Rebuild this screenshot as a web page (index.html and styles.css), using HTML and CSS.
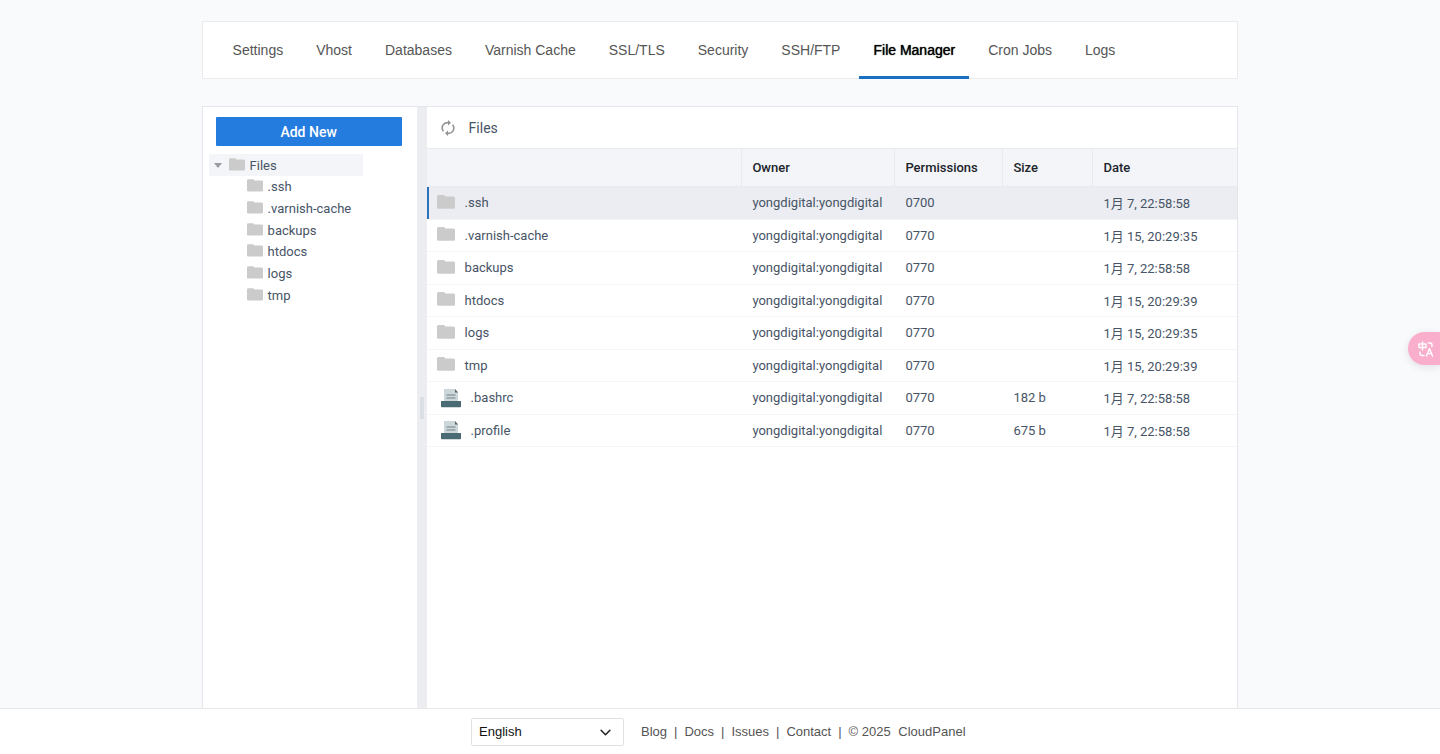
FILE: index.html
```
<!DOCTYPE html>
<html lang="en">
<head>
  <meta charset="UTF-8" />
  <meta name="viewport" content="width=device-width, initial-scale=1.0"/>
  <title>CloudPanel | File Manager</title>
  <link rel="stylesheet" href="styles.css">
</head>
<body>
  <svg class="sprite" aria-hidden="true">
    <symbol id="folder" viewBox="0 0 18 14">
      <path d="M1.5 0h5.500l1.500 1.500h8q1.500 0 1.500 1.500v9.500q0 1.300-1.300 1.300H1.300Q0 13.800 0 12.500V1.500Q0 0 1.500 0z" fill="#cbcbcb"/>
    </symbol>
    <symbol id="file" viewBox="0 0 20 20">
      <path d="M3 1h11l3 3v9H3z" fill="#cdd6d8"/>
      <path d="M14 1l3 3.500h-3z" fill="#4f666c"/>
      <path d="M5.500 7h9M5.500 10h9" stroke="#6f8388" stroke-width="1.200"/>
      <path d="M0 13h20v5.500q0 .8-.8.8H.8q-.8 0-.8-.8z" fill="#4a6a74"/>
    </symbol>
  </svg>

  <main class="container">
    <nav class="tabs">
      <a href="#">Settings</a>
      <a href="#">Vhost</a>
      <a href="#">Databases</a>
      <a href="#">Varnish Cache</a>
      <a href="#">SSL/TLS</a>
      <a href="#">Security</a>
      <a href="#">SSH/FTP</a>
      <a href="#" class="active">File Manager</a>
      <a href="#">Cron Jobs</a>
      <a href="#">Logs</a>
    </nav>

    <section class="manager">
      <aside class="sidebar">
        <button type="button" class="add-btn">Add New</button>
        <div class="tree">
          <div class="tree-root">
            <svg class="caret" viewBox="0 0 8 5"><path d="M0 0h8L4 5z" fill="#999da3"/></svg>
            <svg class="folder"><use href="#folder"/></svg>
            <span>Files</span>
          </div>
          <ul class="tree-list">
            <li><svg class="folder"><use href="#folder"/></svg>.ssh</li>
            <li><svg class="folder"><use href="#folder"/></svg>.varnish-cache</li>
            <li><svg class="folder"><use href="#folder"/></svg>backups</li>
            <li><svg class="folder"><use href="#folder"/></svg>htdocs</li>
            <li><svg class="folder"><use href="#folder"/></svg>logs</li>
            <li><svg class="folder"><use href="#folder"/></svg>tmp</li>
          </ul>
        </div>
      </aside>

      <div class="resizer"><span></span></div>

      <div class="content">
        <div class="path">
          <button type="button" class="refresh" aria-label="Refresh">
            <svg viewBox="0 0 14 16" fill="none" stroke="#939393" stroke-width="1.600">
              <path d="M2.400 11.200A5.300 5.300 0 0 1 7.500 2.700M11.600 4.800A5.300 5.300 0 0 1 6.500 13.300"/>
              <path d="M7 0l3 2.700-3 2.700zM7 10.600l-3 2.700 3 2.700z" fill="#939393" stroke="none"/>
            </svg>
          </button>
          <span>Files</span>
        </div>
        <table class="files">
          <colgroup>
            <col>
            <col class="col-owner">
            <col class="col-perm">
            <col class="col-size">
            <col class="col-date">
          </colgroup>
          <thead>
            <tr><th></th><th>Owner</th><th>Permissions</th><th>Size</th><th>Date</th></tr>
          </thead>
          <tbody>
            <tr class="selected"><td><div class="name"><svg class="folder"><use href="#folder"/></svg>.ssh</div></td><td>yongdigital:yongdigital</td><td>0700</td><td></td><td>1月 7, 22:58:58</td></tr>
            <tr><td><div class="name"><svg class="folder"><use href="#folder"/></svg>.varnish-cache</div></td><td>yongdigital:yongdigital</td><td>0770</td><td></td><td>1月 15, 20:29:35</td></tr>
            <tr><td><div class="name"><svg class="folder"><use href="#folder"/></svg>backups</div></td><td>yongdigital:yongdigital</td><td>0770</td><td></td><td>1月 7, 22:58:58</td></tr>
            <tr><td><div class="name"><svg class="folder"><use href="#folder"/></svg>htdocs</div></td><td>yongdigital:yongdigital</td><td>0770</td><td></td><td>1月 15, 20:29:39</td></tr>
            <tr><td><div class="name"><svg class="folder"><use href="#folder"/></svg>logs</div></td><td>yongdigital:yongdigital</td><td>0770</td><td></td><td>1月 15, 20:29:35</td></tr>
            <tr><td><div class="name"><svg class="folder"><use href="#folder"/></svg>tmp</div></td><td>yongdigital:yongdigital</td><td>0770</td><td></td><td>1月 15, 20:29:39</td></tr>
            <tr><td><div class="name"><svg class="file"><use href="#file"/></svg>.bashrc</div></td><td>yongdigital:yongdigital</td><td>0770</td><td>182 b</td><td>1月 7, 22:58:58</td></tr>
            <tr><td><div class="name"><svg class="file"><use href="#file"/></svg>.profile</div></td><td>yongdigital:yongdigital</td><td>0770</td><td>675 b</td><td>1月 7, 22:58:58</td></tr>
          </tbody>
        </table>
      </div>
    </section>
  </main>

  <footer class="footer">
    <div class="lang">
      <select aria-label="Language">
        <option>English</option>
      </select>
      <svg viewBox="0 0 10 6"><path d="M1 1l4 4 4-4" fill="none" stroke="#222" stroke-width="1.400" stroke-linecap="round" stroke-linejoin="round"/></svg>
    </div>
    <div class="links">
      <a href="#">Blog</a><span>|</span>
      <a href="#">Docs</a><span>|</span>
      <a href="#">Issues</a><span>|</span>
      <a href="#">Contact</a><span>|</span>
    </div>
    <div class="copy">© 2025 <a href="#">CloudPanel</a></div>
  </footer>

  <button type="button" class="translate" aria-label="Translate">
    <svg viewBox="0 0 16 16" fill="none" stroke="#fff" stroke-width="1.400" stroke-linecap="round" stroke-linejoin="round">
      <path d="M1 3h7v3.500H1zM4.500 1v8M10.500 2h1.500q2 0 2 2v1.500M2 11v1.500q0 2 2 2h2"/>
      <path d="M8.500 15l3-7.500 3 7.500M9.600 12.600h3.800"/>
    </svg>
  </button>
</body>
</html>
```
FILE: styles.css
```
* {
  box-sizing: border-box;
}
body {
  margin: 0;
  height: 100vh;
  display: flex;
  flex-direction: column;
  font-family: "Liberation Sans", Arial, sans-serif;
  font-size: 14px;
  color: #555;
  background: #f9fafc;
  overflow: hidden;
}
a {
  color: inherit;
  text-decoration: none;
}
button {
  border: 0;
  padding: 0;
  cursor: pointer;
}
.sprite {
  display: none;
}
.container {
  flex: 1;
  min-height: 0;
  width: 72%;
  margin: 0 auto;
  padding-top: 21px;
  display: flex;
  flex-direction: column;
  gap: 27px;
}
.tabs {
  display: flex;
  gap: 5px;
  height: 58px;
  padding: 0 16px;
  background: #fff;
  border: 1px solid #ebebed;
}
.tabs a {
  display: flex;
  align-items: center;
  padding: 0 14px;
  margin-bottom: -1px;
  border-top: 2px solid transparent;
  border-bottom: 3px solid transparent;
}
.tabs .active {
  color: #000;
  text-shadow: 0 0 1px #000;
  border-bottom-color: #1b6fc0;
}
.manager {
  flex: 1;
  min-height: 0;
  display: flex;
  background: #fff;
  border: 1px solid #e4e6ea;
  border-bottom: 0;
  font-family: Roboto, "Noto Sans CJK SC", sans-serif;
  font-size: 13px;
  color: #475466;
}
.folder {
  width: 18px;
  height: 14px;
  flex: none;
}
.sidebar {
  width: 214px;
  padding: 10px 15px 0 13px;
}
.add-btn {
  width: 100%;
  height: 29px;
  border-radius: 1px;
  background: #257cdf;
  color: #fff;
  font: 500 14px Roboto, sans-serif;
}
.tree {
  margin: 8px 0 0 -7px;
}
.tree-root {
  display: flex;
  align-items: center;
  width: 154px;
  height: 22px;
  padding-left: 5px;
  background: #f4f5f9;
}
.tree .folder {
  width: 16px;
  height: 13px;
  margin: -2px 5px 0 0;
}
.tree .caret {
  width: 8px;
  height: 5px;
  margin-right: 7px;
}
.tree-list {
  display: grid;
  grid-auto-rows: 1fr;
  height: 130px;
  margin: 0;
  padding: 0 0 0 38px;
  list-style: none;
}
.tree-list li {
  display: flex;
  align-items: center;
}
.resizer {
  width: 10px;
  display: flex;
  align-items: center;
  justify-content: center;
  background: #ebedf0;
}
.resizer span {
  width: 4px;
  height: 22px;
  background: #dadfe5;
}
.content {
  flex: 1;
}
.path {
  display: flex;
  align-items: center;
  gap: 14px;
  height: 41px;
  padding-left: 14px;
  font-size: 14px;
}
.refresh {
  width: 14px;
  height: 16px;
  background: none;
}
.refresh svg {
  display: block;
}
.files {
  width: 100%;
  height: 299px;
  table-layout: fixed;
  border-spacing: 0;
}
.col-owner {
  width: 153px;
}
.col-perm {
  width: 108px;
}
.col-size {
  width: 90px;
}
.col-date {
  width: 145px;
}
.files thead tr {
  height: 39px;
}
.files th {
  padding: 0 0 0 10px;
  text-align: left;
  font-weight: 500;
  color: #20242b;
  background: #f4f5f8;
  border-top: 1px solid #e8eaee;
  border-bottom: 1px solid #e8eaee;
}
.files th + th {
  border-left: 1px solid #e8eaee;
}
.files td {
  padding: 0 0 0 11px;
  border-bottom: 1px solid #f4f5f7;
  white-space: nowrap;
}
.files td:first-child {
  padding-left: 10px;
}
.name {
  display: flex;
  align-items: center;
  height: 20px;
}
.name .folder {
  margin: -2px 10px 0 0;
}
.name .file {
  width: 20px;
  height: 20px;
  margin: 0 10px 0 4px;
}
.selected td {
  background: #ebedf2;
}
.selected td:first-child {
  box-shadow: inset 2px 0 #2c71bd;
}
.footer {
  flex: none;
  display: flex;
  align-items: center;
  height: 46px;
  padding-left: calc(50% - 249px);
  background: #fff;
  border-top: 1px solid #e8e8e8;
  font-size: 13px;
}
.lang {
  position: relative;
  width: 153px;
  margin-right: 17px;
}
.lang select {
  appearance: none;
  display: block;
  width: 100%;
  height: 28px;
  padding: 0 7px;
  border: 1px solid #e2e2e4;
  border-radius: 2px;
  background: #fff;
  color: #111;
  font: inherit;
}
.lang svg {
  position: absolute;
  top: 11px;
  right: 13px;
  width: 11px;
  height: 7px;
  pointer-events: none;
}
.links {
  display: flex;
  gap: 7px;
  margin-right: 7px;
}
.copy a {
  margin-left: 4px;
}
.translate {
  position: fixed;
  top: 332px;
  right: 0;
  width: 32px;
  height: 33px;
  padding-left: 10px;
  border-radius: 17px 0 0 17px;
  background: #f9aecb;
  box-shadow: 0 2px 8px rgba(0, 0, 0, 0.1);
}
.translate svg {
  display: block;
  width: 16px;
  height: 16px;
}
```
